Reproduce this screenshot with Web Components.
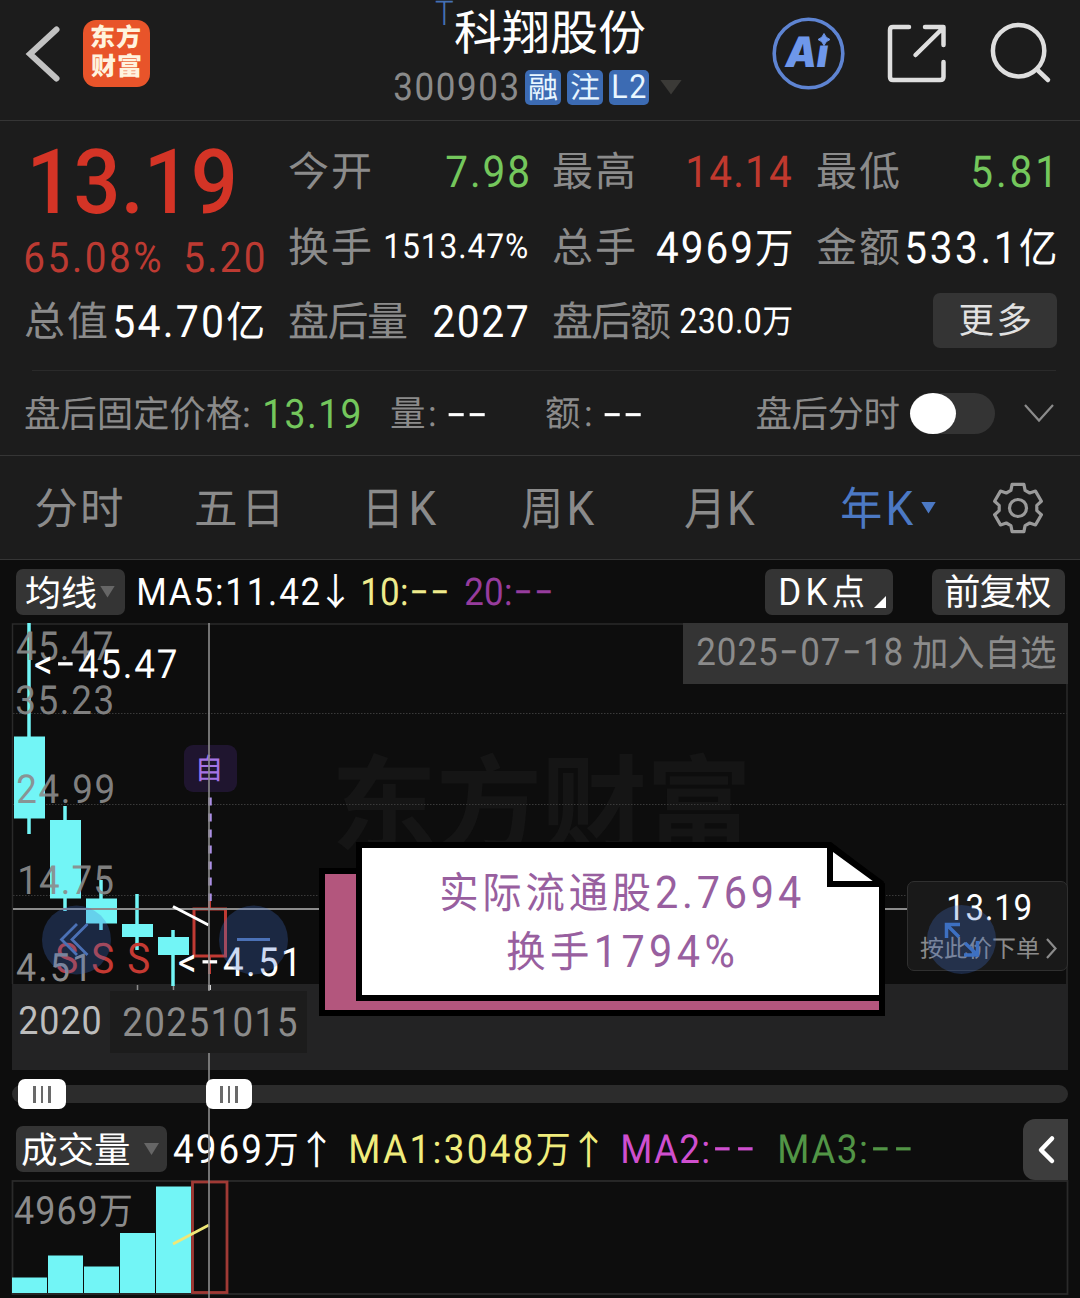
<!DOCTYPE html>
<html lang="zh-CN">
<head>
<meta charset="UTF-8">
<title>科翔股份 300903</title>
<style>
  body {
    margin: 0;
    width: 1080px;
    height: 1298px;
    overflow: hidden;
    background: #0d0d0d;
    color: #fff;
    font-family: Roboto, "Noto Sans CJK SC", sans-serif;
    text-rendering: geometricPrecision;
  }
</style>
</head>
<body>
<stock-page></stock-page>

<script>
const FONT = 'Roboto, "Noto Sans CJK SC", sans-serif';
const scratch = document.createElement('canvas');
scratch.width = 200;
scratch.height = 160;
const pen = scratch.getContext('2d', { willReadFrequently: true });

// Empty space on both sides of a glyph, found by drawing it
function bearings(char, font) {
  pen.clearRect(0, 0, 200, 160);
  pen.font = font;
  pen.fillText(char, 20, 120);
  const { data } = pen.getImageData(0, 0, 200, 160);
  let min = 200;
  let max = 0;
  for (let i = 0; i < 200 * 160; i++) {
    if (data[i * 4 + 3] > 100) {
      min = Math.min(min, i % 200);
      max = Math.max(max, i % 200);
    }
  }
  return { left: min - 20, right: pen.measureText(char).width - (max + 1 - 20) };
}

// A single line of text, letter-spaced so that its ink is exactly `w` wide.
// Digits and Latin letters are slightly condensed.
class FitText extends HTMLElement {
  connectedCallback() {
    if (this.shadowRoot) return;
    const size = +this.getAttribute('size') || 40;
    const weight = this.getAttribute('weight') || 400;
    const text = this.textContent.trim();
    const runs = text.match(/-+|[\u2190-\u21ff\u4e00-\u9fff]+|[^-\u2190-\u21ff\u4e00-\u9fff]+/g);
    const hasLatin = /[0-9A-Za-z<]/.test(text);
    const zoom = hasLatin ? 0.95 : 1;
    const squeeze = hasLatin ? 0.92 : 1;
    const width = this.getAttribute('w') / squeeze;

    this.attachShadow({ mode: 'open' });
    this.shadowRoot.innerHTML = `
      <style>
        :host {
          display: block;
          flex: none;
          width: ${width * squeeze}px;
          height: ${size}px;
          font: ${weight} ${size}px/${size}px ${FONT};
          white-space: nowrap;
        }
        span {
          display: inline-block;
          transform-origin: 0 50%;
        }
      </style>
      <span><slot></slot></span>
    `;

    this.textContent = '';
    const fonts = runs.map(run => {
      const el = document.createElement('span');
      el.textContent = run;
      let px = size;
      let family = FONT;
      let w = weight;
      if (run[0] === '-') {
        family = 'Inter, sans-serif';
        px = size * 1.3;
        w = 300;
      } else if (/[\u2190-\u9fff]/.test(run)) {
        px = size * zoom;
        family = '"Noto Sans CJK SC", sans-serif';
      }
      el.style.cssText = `font:${w} ${px}px/0 ${family}`;
      if (run[0] === '-') el.style.verticalAlign = '-0.05em';
      this.append(el);
      return `${w} ${px}px ${family}`;
    });

    const inner = this.shadowRoot.querySelector('span');
    const natural = inner.getBoundingClientRect().width;
    const { left } = bearings(text[0], fonts[0]);
    const { right } = bearings(text[text.length - 1], fonts[fonts.length - 1]);
    if (text.length > 1) {
      inner.style.letterSpacing = (width - (natural - left - right)) / (text.length - 1) + 'px';
    }
    inner.style.transform = `translate(${-left * squeeze}px, ${hasLatin ? 0.014 : 0.055}em) scaleX(${squeeze})`;
  }
}
customElements.define('fit-text', FitText);

// Rounded grey button used in the toolbars
class ChipButton extends HTMLElement {
  connectedCallback() {
    this.attachShadow({ mode: 'open' });
    this.shadowRoot.innerHTML = `
      <style>
        :host {
          display: flex;
          flex: none;
          align-items: center;
          box-sizing: border-box;
          height: 46px;
          border-radius: 7px;
          background: #343434;
          color: #fff;
        }
      </style>
      <slot></slot>
    `;
  }
}
customElements.define('chip-button', ChipButton);

class TriangleDown extends HTMLElement {
  connectedCallback() {
    this.attachShadow({ mode: 'open' });
    this.shadowRoot.innerHTML = `
      <style>
        :host { display: block; flex: none; width: 15px; height: 12px; color: #666; }
        div {
          height: 100%;
          background: currentColor;
          clip-path: polygon(0 0, 100% 0, 50% 100%);
        }
      </style>
      <div></div>
    `;
  }
}
customElements.define('triangle-down', TriangleDown);

class StockHeader extends HTMLElement {
  connectedCallback() {
    this.attachShadow({ mode: 'open' });
    this.shadowRoot.innerHTML = `
      <style>
        :host {
          display: flex;
          box-sizing: border-box;
          height: 121px;
          background: #1c1c1c;
          border-bottom: 1px solid #353535;
        }
        svg { display: block; flex: none; }
        .logo {
          flex: none;
          box-sizing: border-box;
          width: 67px;
          height: 67px;
          margin: 20px 0 0 17px;
          padding: 5px 0 0 9px;
          border-radius: 13px;
          background: #e8542a;
          color: #fff3de;
        }
        .logo fit-text + fit-text { margin-top: 4px; }
        .name { margin-left: 245px; width: 289px; }
        .title { display: flex; height: 62px; align-items: center; padding-left: 41px; box-sizing: border-box; }
        .title .t { color: #4470b4; margin: -35px 2px 0 0; }
        .code { display: flex; height: 50px; align-items: center; color: #8a8a8a; }
        .badge {
          display: flex;
          align-items: center;
          justify-content: center;
          width: 36px;
          height: 35px;
          margin-right: 6px;
          border-radius: 5px;
          background: #3c6bb3;
          color: #e8f6ff;
        }
        .badge.level { width: 40px; margin-right: 11px; }
        .code .badge:nth-of-type(1) { margin-left: 8px; }
        .code triangle-down { width: 22px; height: 15px; color: #3b3a37; }
      </style>
      <svg width="66" height="120" fill="none" stroke="#c2c2c2" stroke-width="6">
        <path d="M56.5 29.500L30 54L56.500 78.500" stroke-linecap="round" stroke-linejoin="miter"/>
      </svg>
      <div class="logo">
        <fit-text w="48" size="25" weight="900">东方</fit-text>
        <fit-text w="48" size="25" weight="900">财富</fit-text>
      </div>
      <div class="name">
        <div class="title">
          <fit-text class="t" w="18" size="34" weight="300">T</fit-text>
          <fit-text w="188" size="48">科翔股份</fit-text>
        </div>
        <div class="code">
          <fit-text w="122" size="38">300903</fit-text>
          <div class="badge"><fit-text w="28" size="30">融</fit-text></div>
          <div class="badge"><fit-text w="28" size="30">注</fit-text></div>
          <div class="badge level"><fit-text w="31" size="33">L2</fit-text></div>
          <triangle-down></triangle-down>
        </div>
      </div>
      <svg style="margin-left:68px" width="328" height="120" viewBox="752 0 328 120" fill="none" stroke="#dedede" stroke-width="4.500">
        <circle cx="808.500" cy="53.500" r="34.300" stroke="#5e84d2" stroke-width="3.600"/>
        <text x="785.500" y="67" font-family="Inter" font-weight="900" font-style="italic" font-size="42" textLength="43" lengthAdjust="spacingAndGlyphs" fill="#6e97ea" stroke="none">Ai</text>
        <path d="M814 33H834V45.500H814Z" fill="#1c1c1c" stroke="none"/>
        <path d="M824 33.500Q825.500 38 830 39.500Q825.500 41 824 45.500Q822.500 41 818 39.500Q822.500 38 824 33.500Z" fill="#6e97ea" stroke="#6e97ea" stroke-width="1"/>
        <g stroke-linecap="round" stroke-linejoin="round">
          <path d="M909 27H893Q890 27 890 30V77Q890 80 893 80H940Q943.500 80 943.500 77V62"/>
          <path d="M925 27H943.500V45M943 28L915.500 55"/>
        </g>
        <circle cx="1018.600" cy="50.700" r="25.700"/>
        <path d="M1037 69.500L1048 80" stroke-linecap="round"/>
      </svg>
    `;
  }
}
customElements.define('stock-header', StockHeader);

class StockQuote extends HTMLElement {
  connectedCallback() {
    // label, label width, value, value width, value size, colour class, right inset
    const stats = [
      ['今开', 80, '7.98', 80.5, 44, 'down'],
      ['最高', 80, '14.14', 102, 44, 'up', 0.5],
      ['最低', 81, '5.81', 77, 44, 'down', 5],
      ['换手', 80, '1513.47%', 141, 34.5],
      ['总手', 80, '4969万', 134, 44],
      ['金额', 81, '533.1亿', 148, 44],
      ['总值', 80, '54.70亿', 148, 44.5],
      ['盘后量', 116, '2027', 93, 44.5],
      ['盘后额', 116, '230.0万', 110, 35],
    ];
    this.attachShadow({ mode: 'open' });
    this.shadowRoot.innerHTML = `
      <style>
        :host {
          display: grid;
          box-sizing: border-box;
          height: 249px;
          padding: 12px 24px 0 26px;
          grid-template-columns: 237px 237px 237px 239px;
          grid-template-rows: 76px 76px 72px;
          column-gap: 27px;
          background: #1c1c1c;
        }
        .price { grid-row: 1 / 3; padding-top: 4px; color: #d43426; }
        .price > fit-text { margin-left: 7px; }
        .change { display: flex; justify-content: space-between; margin-top: 10px; color: #bd3a32; }
        .stat { display: flex; align-items: center; justify-content: space-between; }
        .label { color: #8b8b8b; }
        .up { color: #c0392e; }
        .down { color: #74c75c; }
        chip-button {
          align-self: center;
          justify-self: end;
          width: 124px;
          height: 55px;
          margin-top: -2px;
          justify-content: center;
          color: #e2e2e2;
        }
      </style>
      <div class="price">
        <fit-text w="200" size="90" weight="500">13.19</fit-text>
        <div class="change">
          <fit-text w="134" size="42">65.08%</fit-text>
          <fit-text w="77" size="42">5.20</fit-text>
        </div>
      </div>
      ${stats.map(([label, lw, value, vw, size, tone = '', inset = 0]) => `
        <div class="stat" style="width:${237 - inset}px">
          <fit-text class="label" w="${lw}" size="41">${label}</fit-text>
          <fit-text class="${tone}" w="${vw}" size="${size}">${value}</fit-text>
        </div>
      `).join('')}
      <chip-button><fit-text w="69" size="35.500">更多</fit-text></chip-button>
    `;
  }
}
customElements.define('stock-quote', StockQuote);

class AfterHours extends HTMLElement {
  connectedCallback() {
    this.attachShadow({ mode: 'open' });
    this.shadowRoot.innerHTML = `
      <style>
        :host {
          display: block;
          background: #1c1c1c;
          color: #8b8b8b;
          border-bottom: 1px solid #353535;
        }
        .line { height: 1px; margin: 0 24px 0 32px; background: #2a2a2a; }
        .row { display: flex; align-items: center; height: 84px; padding-left: 26px; }
        .value { color: #fff; }
        .toggle {
          flex: none;
          width: 85px;
          height: 41px;
          border-radius: 21px;
          background: #343434;
          margin-left: 11px;
        }
        .toggle div { width: 46px; height: 41px; border-radius: 50%; background: #fff; }
      </style>
      <div class="line"></div>
      <div class="row">
        <fit-text w="222" size="36.500">盘后固定价格:</fit-text>
        <fit-text style="margin-left:17px;color:#74c75c" w="94" size="40.500">13.19</fit-text>
        <fit-text style="margin-left:33px" w="42" size="35.500">量:</fit-text>
        <fit-text class="value" style="margin-left:15px" w="36" size="38">--</fit-text>
        <fit-text style="margin-left:62px" w="43" size="35.500">额:</fit-text>
        <fit-text class="value" style="margin-left:15px" w="36" size="38">--</fit-text>
        <fit-text style="margin-left:116.500px" w="141" size="36.500">盘后分时</fit-text>
        <div class="toggle"><div></div></div>
        <svg style="margin-left:28px" width="32" height="20" fill="none" stroke="#8b8b8b" stroke-width="2.200">
          <path d="M2 2L16 17.500L30 2"/>
        </svg>
      </div>
    `;
  }
}
customElements.define('after-hours', AfterHours);

class PeriodTabs extends HTMLElement {
  gear() {
    const points = [];
    for (let tooth = 0; tooth < 6; tooth++) {
      for (const [offset, radius] of [[-22, 19], [-14, 24.3], [14, 24.3], [22, 19]]) {
        const a = (tooth * 60 - 90 + offset) * Math.PI / 180;
        points.push(`${(27 + radius * Math.cos(a)).toFixed(1)},${(27 + radius * Math.sin(a)).toFixed(1)}`);
      }
    }
    return points.join(' ');
  }

  connectedCallback() {
    this.attachShadow({ mode: 'open' });
    this.shadowRoot.innerHTML = `
      <style>
        :host {
          display: flex;
          align-items: center;
          height: 103px;
          padding-left: 36.500px;
          background: #1c1c1c;
          color: #8b8b8b;
          border-bottom: 1px solid #353535;
        }
        .active { color: #4c79c4; }
      </style>
      <fit-text w="85.500" size="43.500">分时</fit-text>
      <fit-text style="margin-left:74px" w="81" size="43.500">五日</fit-text>
      <fit-text style="margin-left:91.500px" w="67" size="48">日K</fit-text>
      <fit-text style="margin-left:87.500px" w="71" size="48">周K</fit-text>
      <fit-text style="margin-left:90.500px" w="69.500" size="48">月K</fit-text>
      <fit-text class="active" style="margin-left:88px" w="71" size="48">年K</fit-text>
      <triangle-down class="active" style="margin-left:8px"></triangle-down>
      <svg style="margin-left:55px" width="54" height="54" fill="none" stroke="#9a9a9a" stroke-width="3.200">
        <polygon points="${this.gear()}" stroke-linejoin="round"/>
        <circle cx="27" cy="27" r="8.500"/>
      </svg>
    `;
  }
}
customElements.define('period-tabs', PeriodTabs);

class MaToolbar extends HTMLElement {
  connectedCallback() {
    this.attachShadow({ mode: 'open' });
    this.shadowRoot.innerHTML = `
      <style>
        :host { display: flex; align-items: center; height: 63px; padding-left: 16px; }
        .corner {
          width: 12px;
          height: 12px;
          margin: 21px 0 0 11px;
          background: #fff;
          clip-path: polygon(100% 0, 100% 100%, 0 100%);
        }
      </style>
      <chip-button style="width:109px;padding-left:10px">
        <fit-text w="70" size="36">均线</fit-text>
        <triangle-down style="margin-left:4px"></triangle-down>
      </chip-button>
      <fit-text style="margin-left:14px" w="180" size="38">MA5:11.42</fit-text>
      <fit-text style="margin-left:8px" w="20" size="37">↓</fit-text>
      <fit-text style="margin-left:16px;color:#eeea8c" w="84" size="38">10:--</fit-text>
      <fit-text style="margin-left:19px;color:#963c9d" w="85" size="38">20:--</fit-text>
      <chip-button style="margin-left:214px;width:128px;padding-left:16px">
        <fit-text w="82" size="38">DK点</fit-text>
        <div class="corner"></div>
      </chip-button>
      <chip-button style="margin-left:39px;width:133px;padding-left:14px">
        <fit-text w="104" size="36.500">前复权</fit-text>
      </chip-button>
    `;
  }
}
customElements.define('ma-toolbar', MaToolbar);

// Candles, price labels and everything that floats over the plot.
// Coordinates are page pixels; the plot starts at y = 623.
class KlineChart extends HTMLElement {
  connectedCallback() {
    // x, wick top, wick bottom, body top, body bottom
    const candles = [
      [29, 623, 834, 736.5, 818.5],
      [65, 806, 911, 820, 898.5],
      [101, 880, 930, 898.5, 923.5],
      [137, 894, 950, 924, 937],
      [173, 930, 986, 937, 955],
    ];
    // text, x, centre y, ink width, size, colour
    const labels = [
      ['45.47', 17, 646, 95, 40, '#8b8b8be8'],
      ['35.23', 17, 699.5, 95, 40, '#8b8b8be8'],
      ['24.99', 17.5, 789, 95, 40, '#8b8b8be8'],
      ['14.75', 19.5, 880, 92.5, 40, '#8b8b8be8'],
      ['S', 57, 959, 20, 42, '#c53a33'],
      ['S', 93, 959, 20, 42, '#c53a33'],
      ['S', 129, 959, 20, 42, '#c53a33'],
      ['4.51', 17, 967, 68, 39, '#8b8b8b'],
      ['<-45.47', 35, 664, 141, 40, '#fff'],
      ['<-4.51', 179, 962, 115, 40, '#fff'],
      ['2020', 19.5, 1020.5, 80, 39, '#bdbdbd'],
    ];
    this.attachShadow({ mode: 'open' });
    this.shadowRoot.innerHTML = `
      <style>
        :host { display: block; position: relative; height: 447px; }
        svg { position: absolute; left: 0; top: 0; }
        .label, .watermark, .tag, .date, .order, .note, .mark { position: absolute; }
        .watermark { left: 337px; top: 126px; color: #151515; }
        .tag {
          right: 12px;
          top: 0;
          display: flex;
          align-items: center;
          width: 385px;
          height: 61px;
          box-sizing: border-box;
          padding: 0 0 3px 15px;
          gap: 12px;
          background: #343434;
          color: #8b8b8b;
        }
        .mark {
          left: 184px;
          top: 122px;
          display: flex;
          align-items: center;
          justify-content: center;
          width: 53px;
          height: 47px;
          border-radius: 9px;
          background: #6b35b833;
          color: #a474e6;
        }
        .date {
          left: 110px;
          top: 368px;
          z-index: 3;
          display: flex;
          align-items: center;
          box-sizing: border-box;
          width: 197px;
          height: 62px;
          padding-left: 14px;
          background: #1c1c1c;
          color: #8b8b8b;
        }
        .order {
          left: 907px;
          top: 258px;
          box-sizing: border-box;
          width: 161px;
          height: 90px;
          padding: 7px 0 0 13px;
          border: 1px solid #303030;
          border-radius: 7px;
          background: #191919;
        }
        .order > fit-text { margin: 0 0 11px 28px; }
        .order div { display: flex; align-items: center; gap: 7px; color: #8b8b8b; }
        .order svg { position: static; }
        .note { left: 362px; top: 246px; width: 517px; color: #985f9f; z-index: 4; }
        .note fit-text { margin: 0 auto; }
        .card { z-index: 4; }
      </style>

      <fit-text class="watermark" w="408" size="106" weight="700">东方财富</fit-text>

      <svg width="1080" height="447" viewBox="0 623 1080 447" fill="none">
        <g stroke="#3a3a3a" stroke-dasharray="1.500 1.500">
          <path d="M13 713.500H1067M13 804.500H1067M13 895.500H1067"/>
        </g>
        <path d="M12.500 984V624H1067V984" stroke="#2a2a2a" stroke-width="1.500"/>
        <rect x="12" y="984" width="1056" height="86" fill="#232324"/>
        <path d="M137.500 985V990M173.500 985V990" stroke="#8b8b8b" stroke-width="1.500"/>
        <path d="M209.500 985V990" stroke="#d0d0d0" stroke-width="3"/>
        ${candles.map(([x, top, bottom, open, close]) => `
          <path d="M${x} ${top}V${bottom}" stroke="#72f5f6" stroke-width="3.500"/>
          <rect x="${x - 15}" y="${open}" width="31" height="${close - open}" fill="#72f5f6"/>
        `).join('')}
        <rect x="194" y="909" width="31.500" height="47" stroke="#c03a33" stroke-width="3"/>
        <path d="M209.500 901V909M209.500 956V974" stroke="#c03a33" stroke-width="3"/>
        <path d="M210 797.500V901" stroke="#ab8ee4" stroke-width="3.500" stroke-dasharray="8 8"/>
        <path d="M13 909H907" stroke="#8c8c8c" stroke-width="2"/>
        <path d="M173 906.500L208.500 925" stroke="#fff" stroke-width="3"/>
      </svg>

      <div class="mark"><fit-text w="22" size="29">自</fit-text></div>
      ${labels.map(([text, x, y, w, size, color]) => `
        <fit-text class="label" w="${w}" size="${size}" style="left:${x}px;top:${y - 623 - size / 2}px;color:${color}">${text}</fit-text>
      `).join('')}

      <div class="tag">
        <fit-text w="203" size="38">2025-07-18</fit-text>
        <fit-text w="142" size="36.500">加入自选</fit-text>
      </div>
      <div class="date"><fit-text w="172" size="40">20251015</fit-text></div>
      <div class="order">
        <fit-text w="81" size="36">13.19</fit-text>
        <div>
          <fit-text w="118" size="24">按此价下单</fit-text>
          <svg width="11" height="21" fill="none" stroke="#8b8b8b" stroke-width="2.200"><path d="M1 1L9.500 10.500L1 20"/></svg>
        </div>
      </div>

      <svg width="1080" height="447" viewBox="0 623 1080 447" fill="none" stroke="#4b71b6" stroke-width="2.800">
        <g fill="#4173d245" stroke="none">
          <circle cx="76.500" cy="940" r="34.500"/>
          <circle cx="253.500" cy="940" r="34.500"/>
          <circle cx="961.500" cy="939.500" r="34.500"/>
        </g>
        <path d="M77 924L61.500 939.500L77 955M87.500 924L72 939.500L87.500 955"/>
        <path d="M237 939.500H270"/>
        <path d="M960 924.500H946.500V938M947 925L959 937M964 955H977.500V941M977 954.500L965 943" stroke="#3d70c2" stroke-width="3.500"/>
      </svg>

      <svg class="card" width="1080" height="447" viewBox="0 623 1080 447" stroke="#000" stroke-width="6">
        <path d="M322 871H400V890H882V1013H322Z" fill="#b3567d"/>
        <path d="M359 845H830L882 885V998H359Z" fill="#fff"/>
        <path d="M830 846V884H882Z" fill="#fff" stroke-linejoin="bevel"/>
        <path d="M827 880V887H834" fill="#000" stroke="none"/>
      </svg>
      <div class="note">
        <fit-text w="358" size="45">实际流通股2.7694</fit-text>
        <fit-text style="margin-top:14px" w="225" size="45">换手1794%</fit-text>
      </div>
    `;
  }
}
customElements.define('kline-chart', KlineChart);

class RangeSlider extends HTMLElement {
  connectedCallback() {
    this.attachShadow({ mode: 'open' });
    this.shadowRoot.innerHTML = `
      <style>
        :host { display: flex; align-items: center; height: 48px; padding: 0 12px; }
        .track {
          display: flex;
          align-items: center;
          flex: 1;
          height: 18px;
          padding-left: 6px;
          border-radius: 9px;
          background: #2c2c2c;
        }
        .thumb {
          position: relative;
          z-index: 3;
          display: flex;
          align-items: center;
          justify-content: center;
          gap: 5px;
          width: 48px;
          height: 30px;
          border-radius: 7px;
          background: #fff;
        }
        .thumb + .thumb { width: 46px; margin-left: 140px; }
        i { width: 2.500px; height: 17px; background: #6a6a6a; }
      </style>
      <div class="track">
        <div class="thumb"><i></i><i></i><i></i></div>
        <div class="thumb"><i></i><i></i><i></i></div>
      </div>
    `;
  }
}
customElements.define('range-slider', RangeSlider);

class VolumePanel extends HTMLElement {
  connectedCallback() {
    const bars = [[12, 1277.5], [48, 1255.5], [84, 1266.5], [120, 1233], [156, 1186.5]];
    this.attachShadow({ mode: 'open' });
    this.shadowRoot.innerHTML = `
      <style>
        :host { display: block; }
        .bar { display: flex; align-items: center; height: 62px; padding-left: 16px; }
        .collapse {
          display: flex;
          align-items: center;
          width: 45px;
          height: 61px;
          margin-left: auto;
          margin-right: 12px;
          border-radius: 12px 0 0 12px;
          background: #3d3d3d;
        }
        .plot { position: relative; height: 118px; }
        .plot svg { display: block; }
        .plot fit-text { position: absolute; left: 15px; top: 11px; color: #8b8b8b; }
      </style>
      <div class="bar">
        <chip-button style="width:151px;padding-left:7px">
          <fit-text w="106" size="36.500">成交量</fit-text>
          <triangle-down style="margin-left:15px"></triangle-down>
        </chip-button>
        <fit-text style="margin-left:7px" w="123" size="40">4969万</fit-text>
        <fit-text style="margin-left:11px" w="21" size="39">↑</fit-text>
        <fit-text style="margin-left:22px;color:#f0ec7c" w="218" size="40">MA1:3048万</fit-text>
        <fit-text style="margin-left:11px;color:#f0ec7c" w="21" size="39">↑</fit-text>
        <fit-text style="margin-left:22px;color:#cf4fcf" w="130" size="40">MA2:--</fit-text>
        <fit-text style="margin-left:27px;color:#529546" w="131" size="40">MA3:--</fit-text>
        <div class="collapse">
          <svg width="45" height="61" fill="none" stroke="#fff" stroke-width="4.500" stroke-linecap="round" stroke-linejoin="round">
            <path d="M29 19.500L18 31L29 42"/>
          </svg>
        </div>
      </div>
      <div class="plot">
        <svg width="1080" height="118" viewBox="0 1180 1080 118" fill="none">
          <rect x="12.500" y="1181" width="1055" height="113" stroke="#2a2a2a" stroke-width="1.800"/>
          ${bars.map(([x, y]) => `<rect x="${x}" y="${y}" width="35" height="${1293 - y}" fill="#72f5f6"/>`).join('')}
          <rect x="192.500" y="1182" width="34.500" height="110.500" stroke="#a03a35" stroke-width="2.800"/>
          <path d="M173 1244L209 1225" stroke="#efe877" stroke-width="2.800"/>
        </svg>
        <fit-text w="116" size="39">4969万</fit-text>
      </div>
    `;
  }
}
customElements.define('volume-panel', VolumePanel);

class StockPage extends HTMLElement {
  connectedCallback() {
    this.attachShadow({ mode: 'open' });
    this.shadowRoot.innerHTML = `
      <style>
        :host { display: flex; flex-direction: column; position: relative; height: 1298px; }
        :host > * { flex: none; }
        /* vertical crosshair through both plots */
        .crosshair {
          position: absolute;
          left: 208px;
          top: 623px;
          bottom: 0;
          width: 2px;
          z-index: 2;
          background: #8c8c8ccc;
        }
      </style>
      <stock-header></stock-header>
      <stock-quote></stock-quote>
      <after-hours></after-hours>
      <period-tabs></period-tabs>
      <ma-toolbar></ma-toolbar>
      <kline-chart></kline-chart>
      <range-slider></range-slider>
      <volume-panel></volume-panel>
      <div class="crosshair"></div>
    `;
  }
}
customElements.define('stock-page', StockPage);
</script>
</body>
</html>
